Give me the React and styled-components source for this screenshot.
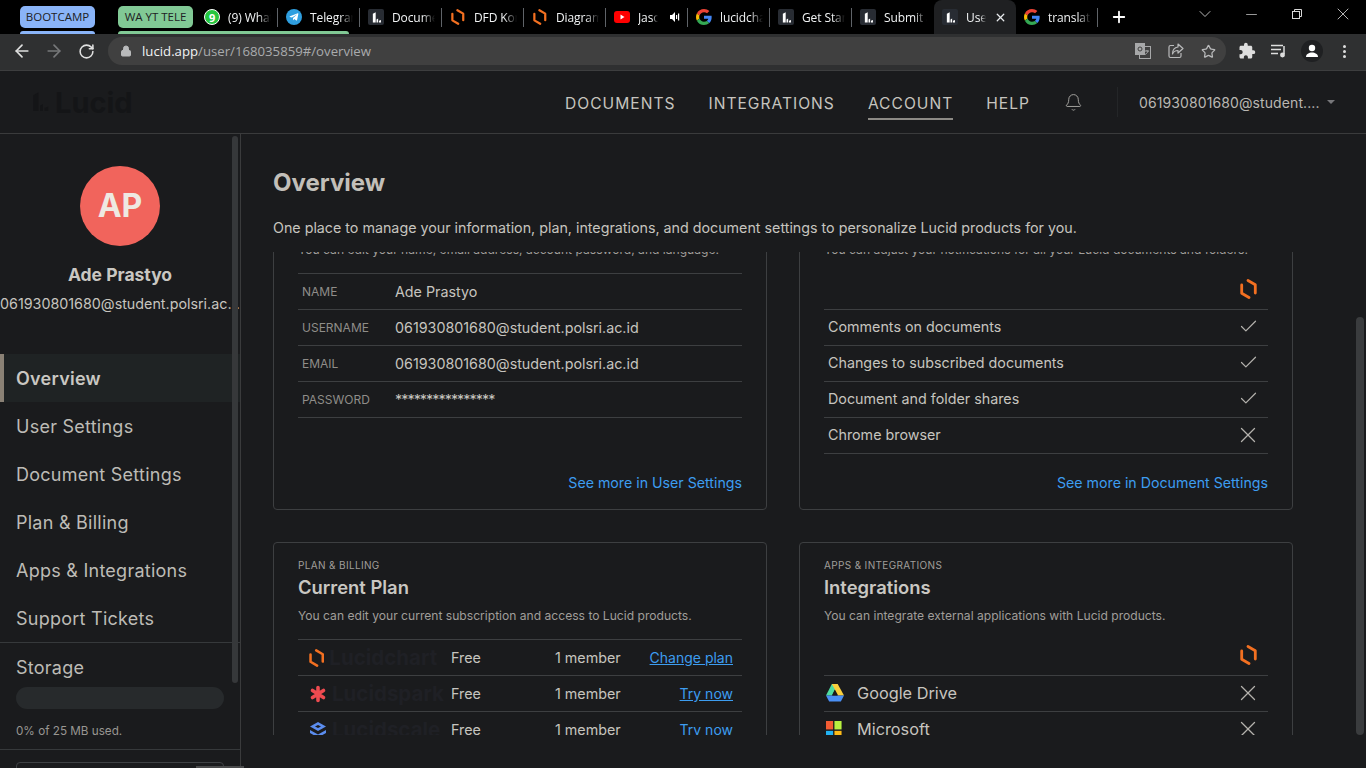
import React from "react";
import styled, { createGlobalStyle } from "styled-components";
import { FaTelegramPlane } from "react-icons/fa";
import { MdExtension } from "react-icons/md";
import { ArrowLeft, ArrowRight, RotateCw, Lock, Star, Bell, Check, X, Plus, ChevronDown, Minus } from "lucide-react";

const GlobalStyle = createGlobalStyle`
  html, body { margin: 0; padding: 0; height: 100%; background: #1a1b1d; overflow: hidden; }
  * { box-sizing: border-box; }
  body { font-family: Inter, "Liberation Sans", sans-serif; color: #c6c4bf; }
`;

const Page = styled.div`
  width: 1366px;
  height: 768px;
  display: flex;
  flex-direction: column;
  overflow: hidden;
`;

/* ---- browser chrome ---- */
const TabStrip = styled.div`
  height: 34px;
  background: #000;
  display: flex;
  padding-left: 20px;
  font-family: "Open Sans", "Liberation Sans", sans-serif;
  position: relative;
`;

const GroupChip = styled.div`
  width: 75px;
  height: 22px;
  margin-top: 6px;
  margin-right: ${(p) => p.$gap}px;
  border-radius: 5px;
  background: ${(p) => p.$color};
  color: #202124;
  font-size: 11.5px;
  line-height: 22px;
  text-align: center;
  white-space: nowrap;
  overflow: hidden;
`;

const GroupLine = styled.div`
  position: absolute;
  top: 31px;
  left: ${(p) => p.$left}px;
  width: ${(p) => p.$width}px;
  height: 3px;
  border-radius: 3px 3px 0 0;
  background: ${(p) => p.$color};
`;

const Tab = styled.div`
  width: 82px;
  height: 34px;
  flex: none;
  display: flex;
  align-items: center;
  padding-left: 8px;
  gap: 8px;
  position: relative;
  font-size: 12px;
  letter-spacing: -0.1px;
  color: #f1f3f4;
  ${(p) => p.$active && "background: #1f2022; border-radius: 8px 8px 0 0;"}
  ${(p) =>
    !p.$noSep &&
    `&::after {
      content: "";
      position: absolute;
      right: 0;
      top: 8px;
      width: 1px;
      height: 19px;
      background: #5f6368;
    }`}
`;

const TabLabel = styled.span`
  flex: 1;
  min-width: 0;
  overflow: hidden;
  white-space: nowrap;
  margin-right: ${(p) => p.$mr}px;
  -webkit-mask-image: linear-gradient(to right, #000 70%, transparent);
  mask-image: linear-gradient(to right, #000 70%, transparent);
`;

const AudioSlot = styled.span`
  position: absolute;
  left: 64px;
  top: 12px;
  display: flex;
`;

const TabClose = styled.span`
  position: absolute;
  right: 9px;
  top: 11px;
  display: flex;
  color: #e8eaed;
`;

const Favicon = styled.span`
  width: 16px;
  height: 16px;
  flex: none;
  display: flex;
  align-items: center;
  justify-content: center;
`;

const WhatsBadge = styled(Favicon)`
  background: #25c63f;
  border-radius: 50%;
  border: 1.5px solid #fff;
  color: #fff;
  font-size: 11px;
  font-weight: 700;
`;

const TeleBadge = styled(Favicon)`
  background: #2f9fe0;
  border-radius: 50%;
  color: #fff;
  font-size: 10px;
`;

const LucidTile = styled(Favicon)`
  background: #282c33;
  border-radius: 2px;
`;

const NewTab = styled.div`
  margin-left: 12px;
  width: 18px;
  display: flex;
  align-items: center;
  color: #fff;
`;

const WindowButtons = styled.div`
  margin-left: auto;
  display: flex;
  color: #d8d8d8;
`;

const WindowButton = styled.div`
  width: 46px;
  height: 28px;
  display: flex;
  align-items: center;
  justify-content: center;
`;

const Toolbar = styled.div`
  height: 37px;
  background: #2f3031;
  border-bottom: 1px solid #3d3e3f;
  display: flex;
  align-items: center;
  padding: 0 0 2px 6px;
  color: #dcdcdc;
`;

const NavIcon = styled.span`
  width: 32px;
  display: flex;
  justify-content: center;
  color: ${(p) => (p.$dim ? "#77787a" : "#e0e0e0")};
`;

const Omnibox = styled.div`
  width: 1118px;
  height: 28px;
  margin-left: 6px;
  border-radius: 14px;
  background: #404040;
  display: flex;
  align-items: center;
  padding-left: 12px;
  font-family: "Open Sans", "Liberation Sans", sans-serif;
  font-size: 13.2px;
  color: #a9abad;
`;

const LockIcon = styled(Lock)`
  margin-right: 10px;
`;

const Host = styled.span`
  color: #f1f3f4;
`;

const OmniActions = styled.div`
  margin-left: auto;
  display: flex;
  align-items: center;
  gap: 17px;
  padding-right: 10px;
  color: #b9babb;
`;

const ToolActions = styled.div`
  display: flex;
  align-items: center;
  gap: 14px;
  margin-left: 12px;
  color: #dedede;
`;

const QueueSlot = styled.span`
  display: flex;
  margin-left: 1px;
`;

const ProfileDot = styled.span`
  width: 22px;
  height: 22px;
  border-radius: 50%;
  background: #1f2022;
  display: flex;
  align-items: center;
  justify-content: center;
`;

const Dots = styled.span`
  display: flex;
  flex-direction: column;
  gap: 2px;
  margin-left: 6px;
  i {
    width: 3px;
    height: 3px;
    border-radius: 50%;
    background: #dedede;
  }
`;

/* ---- app header ---- */
const Header = styled.header`
  height: 63px;
  flex: none;
  display: flex;
  align-items: center;
  padding-left: 28px;
  border-bottom: 1px solid #3a3b3c;
  background: #1a1b1d;
`;

const Logo = styled.div`
  display: flex;
  align-items: center;
  gap: 3px;
  font-size: 29px;
  font-weight: 700;
  color: #141517;
`;

const TopNav = styled.nav`
  margin-left: auto;
  display: flex;
  align-items: center;
  height: 100%;
`;

const TopLink = styled.a`
  font-size: 15.6px;
  letter-spacing: 1px;
  color: #c6c4bf;
  margin-right: 33px;
  padding: 10px 0 5px;
  border-bottom: 2px solid ${(p) => (p.$active ? "#8c8a85" : "transparent")};
`;

const BellWrap = styled.span`
  display: flex;
  color: #a8a6a2;
  padding-right: 34px;
  margin-left: 1px;
  border-right: 1px solid #242628;
  height: 30px;
  align-items: center;
`;

const UserMenu = styled.div`
  width: 248px;
  padding-left: 21px;
  font-size: 14px;
  color: #b9b7b2;
  display: flex;
  align-items: center;
  letter-spacing: 0.1px;
  &::after {
    content: "";
    margin-left: 7px;
    border: 4px solid transparent;
    border-top-color: #77777a;
    border-bottom: 0;
  }
`;

/* ---- body ---- */
const Body = styled.div`
  flex: 1;
  min-height: 0;
  display: flex;
  position: relative;
`;

const Sidebar = styled.aside`
  width: 241px;
  flex: none;
  border-right: 1px solid #3a3b3c;
  position: relative;
  overflow: hidden;
`;

const ScrollThumb = styled.div`
  position: absolute;
  top: ${(p) => p.$top}px;
  left: ${(p) => p.$left}px;
  width: ${(p) => p.$w}px;
  height: ${(p) => p.$h}px;
  border-radius: 4px;
  background: #36383a;
  z-index: 1;
`;

const CornerThumb = styled(ScrollThumb)`
  border-radius: 0;
  background: #4a4b4c;
`;

const Profile = styled.div`
  padding-top: 32px;
  display: flex;
  flex-direction: column;
  align-items: center;
  height: 220px;
`;

const Avatar = styled.div`
  width: 80px;
  height: 80px;
  border-radius: 50%;
  background: #f1645c;
  color: #eee9e2;
  font-size: 32px;
  font-weight: 700;
  padding-bottom: 2px;
  display: flex;
  align-items: center;
  justify-content: center;
`;

const ProfileName = styled.div`
  margin-top: 18px;
  font-size: 17.5px;
  font-weight: 700;
  color: #c9c7c2;
  line-height: 22px;
`;

const ProfileMail = styled.div`
  margin-top: 8px;
  width: 240px;
  font-size: 14.3px;
  line-height: 20px;
  white-space: nowrap;
  overflow: hidden;
  text-overflow: ellipsis;
  color: #c6c4bf;
`;

const SideItem = styled.div`
  height: 48px;
  display: flex;
  align-items: center;
  padding-left: ${(p) => (p.$active ? 12 : 16)}px;
  font-size: 18px;
  letter-spacing: 0.25px;
  color: ${(p) => (p.$active ? "#c9c7c2" : "#bdbbb6")};
  font-weight: ${(p) => (p.$active ? 600 : 400)};
  background: ${(p) => (p.$active ? "#1f2324" : "transparent")};
  border-left: ${(p) => (p.$active ? "4px solid #8a8175" : "0")};
`;

const Storage = styled.div`
  border-top: 1px solid #36393b;
  border-bottom: 1px solid #36393b;
  height: 108px;
  padding: 13px 16px 0;
`;

const StorageTitle = styled.div`
  font-size: 18px;
  line-height: 24px;
  letter-spacing: 0.25px;
  color: #bdbbb6;
`;

const StorageBar = styled.div`
  height: 22px;
  margin-top: 7px;
  border-radius: 11px;
  background: #272a2c;
`;

const StorageNote = styled.div`
  margin-top: 14px;
  font-size: 11.7px;
  line-height: 16px;
  color: #989692;
`;

const SideBox = styled.div`
  margin: 12px 16px 0;
  height: 40px;
  border: 1px solid #3e4144;
  border-radius: 4px;
`;

const Main = styled.main`
  flex: 1;
  min-width: 0;
  position: relative;
  padding-left: 32px;
`;

const Title = styled.h1`
  margin: 35px 0 0;
  font-size: 24px;
  line-height: 28px;
  font-weight: 700;
  color: #c2bfb9;
`;

const Lead = styled.p`
  margin: 21px 0 0;
  font-size: 14.27px;
  line-height: 20px;
  color: #c6c4bf;
`;

const Clip = styled.div`
  margin-top: 14px;
  height: 483px;
  overflow: hidden;
`;

const CardGrid = styled.div`
  margin-top: -76px;
  display: grid;
  grid-template-columns: 494px 494px;
  column-gap: 32px;
  row-gap: 32px;
`;

const Card = styled.section`
  height: ${(p) => p.$h}px;
  border: 1px solid #3d3f41;
  border-radius: 4px;
  padding: 0 24px;
  position: relative;
`;

const Eyebrow = styled.div`
  padding-top: 15px;
  font-size: 10px;
  line-height: 14px;
  letter-spacing: 0.35px;
  color: #a09e9a;
  text-transform: uppercase;
`;

const CardTitle = styled.h2`
  margin: 3px 0 0;
  font-size: 18.4px;
  line-height: 24px;
  font-weight: 600;
  color: #c9c7c2;
`;

const CardText = styled.p`
  margin: 9px 0 0;
  font-size: 12.1px;
  line-height: 16px;
  color: #a09e9a;
`;

const Rows = styled.div`
  margin-top: 15px;
`;

const Row = styled.div`
  height: 36px;
  padding-bottom: ${(p) => (p.$lift ? 2 : 0)}px;
  border-top: 1px solid #3d3f41;
  display: flex;
  align-items: center;
  font-size: 14.3px;
  color: #c6c4bf;
  &:last-child {
    border-bottom: 1px solid #3d3f41;
    height: 37px;
  }
`;

const Label = styled.span`
  width: 97px;
  padding-left: 4px;
  font-size: 12px;
  color: #8f8d89;
`;

const Masked = styled.span`
  letter-spacing: -0.95px;
`;

const LogoRow = styled.div`
  height: 36px;
  padding: 0 11px 4px 0;
  display: flex;
  justify-content: flex-end;
  align-items: center;
`;

const RowName = styled.span`
  padding-left: 4px;
  flex: 1;
`;

const MarkIcon = styled.span`
  width: 26px;
  margin-right: 7px;
  display: flex;
  justify-content: center;
  color: #b4b2ad;
`;

const SeeMore = styled.a`
  position: absolute;
  right: 24px;
  top: 296px;
  font-size: 14.2px;
  line-height: 20px;
  color: #3d9df0;
`;

const Product = styled.span`
  width: 153px;
  padding-left: 11px;
  display: flex;
  align-items: center;
  gap: 5px;
  font-size: 20.5px;
  font-weight: 700;
  color: #1f2025;
  white-space: nowrap;
`;

const Cell = styled.span`
  width: ${(p) => p.$w}px;
`;

const PlanLink = styled.a`
  margin-left: auto;
  padding-right: 9px;
  font-size: 14px;
  color: #3d9df0;
  text-decoration: underline;
`;

const AppName = styled.span`
  flex: 1;
  display: flex;
  align-items: center;
  gap: 10px;
  font-size: 16.3px;
`;

const AppIcon = styled.span`
  width: 23px;
  padding-left: 2px;
  display: flex;
`;

const PageThumb = styled(ScrollThumb)`
  background: #3a3c3e;
`;

/* ---- drawings ---- */
const LucidGlyph = ({ size = 16, color = "#fff" }) => (
  <svg width={size} height={size} viewBox="0 0 16 16">
    <path d="M3.500 3.500 7 1.500V14H3.500z M8 14v-3.500l2-1.200V14z M11 14v-2l2.500-1v3z" fill={color} />
  </svg>
);

const Hex = ({ size = 16 }) => (
  <svg width={size * 0.85} height={size} viewBox="0 0 17 20" fill="none" stroke="#f37021" strokeWidth="2.800" strokeLinecap="round" strokeLinejoin="round">
    <path d="M8 1.500 15.300 5.800V14M9 18.500 1.700 14.200V6" />
  </svg>
);

const GoogleG = () => (
  <svg width="16" height="16" viewBox="0 0 48 48">
    <path fill="#EA4335" d="M24 9.500c3.500 0 6.700 1.200 9.200 3.600l6.900-6.900C35.900 2.400 30.500 0 24 0 14.600 0 6.500 5.400 2.600 13.200l8 6.200C12.500 13.600 17.800 9.500 24 9.500z" />
    <path fill="#4285F4" d="M47 24.500c0-1.600-.1-3.100-.4-4.500H24v9h12.900c-.6 3-2.200 5.500-4.700 7.200l7.700 6C44.400 37.900 47 31.800 47 24.500z" />
    <path fill="#FBBC05" d="M10.500 28.600c-.5-1.400-.8-3-.8-4.600s.3-3.200.8-4.600l-8-6.200C.9 16.400 0 20.100 0 24s.9 7.600 2.600 10.800z" />
    <path fill="#34A853" d="M24 48c6.500 0 11.900-2.100 15.900-5.800l-7.700-6c-2.200 1.400-4.900 2.300-8.200 2.300-6.200 0-11.500-4.200-13.400-9.800l-8 6.200C6.500 42.600 14.600 48 24 48z" />
  </svg>
);

const YouTube = () => (
  <svg width="16" height="12" viewBox="0 0 16 12">
    <rect width="16" height="12" rx="3" fill="#f00" />
    <path d="M6.500 3.500v5l4-2.500z" fill="#fff" />
  </svg>
);

const Speaker = () => (
  <svg width="10" height="10" viewBox="0 0 10 10" fill="#fff">
    <path d="M0 3h2l3-3v10L2 7H0z" />
    <rect x="6" y="3" width="1.200" height="4" />
    <rect x="8" y="1.500" width="1.200" height="7" />
  </svg>
);

const TranslateIcon = () => (
  <svg width="16" height="16" viewBox="0 0 16 16" fill="none" stroke="#a7a8a9">
    <rect x="4.500" y="3.500" width="11" height="12" />
    <rect x="0.500" y="0.500" width="9" height="11" fill="#a7a8a9" />
    <circle cx="5" cy="6" r="2" stroke="#404040" />
    <path d="M10 8h4M12 7v1M13 8c-.5 2-2 3-3 3.500" />
  </svg>
);

const ShareArrow = () => (
  <svg width="16" height="16" viewBox="0 0 16 16" fill="none" stroke="#b9babb" strokeWidth="1.200" strokeLinejoin="round">
    <path d="M6 2.500H2.500a1.500 1.500 0 0 0-1.500 1.500v9a1.500 1.500 0 0 0 1.500 1.500h9a1.500 1.500 0 0 0 1.500-1.500v-3" />
    <path d="M10 1l5 4.500-5 4.500V7.500C7.500 7.500 5.500 8.500 4.500 11c0-4 2-6.500 5.500-7z" />
  </svg>
);

const QueueIcon = () => (
  <svg width="16" height="14" viewBox="0 0 16 14" fill="none" stroke="#dedede" strokeWidth="1.500">
    <path d="M0 1.500h12M0 5.500h10M0 9.500h7M13 2v8" />
    <circle cx="11.500" cy="11" r="1.700" fill="#dedede" />
  </svg>
);

const RestoreIcon = () => (
  <svg width="10" height="10" viewBox="0 0 10 10" fill="none" stroke="#d8d8d8">
    <rect x="0.500" y="2.500" width="7" height="7" />
    <path d="M2.500 2.500v-2h7v7h-2" />
  </svg>
);

const PersonIcon = () => (
  <svg width="14" height="14" viewBox="0 0 14 14" fill="#fff">
    <circle cx="7" cy="4" r="3.200" />
    <path d="M1 13c0-3 3-4.500 6-4.500s6 1.500 6 4.500z" />
  </svg>
);

const Spark = () => (
  <svg width="18" height="18" viewBox="0 0 18 18" stroke="#ee4b50" strokeWidth="3.600" strokeLinecap="round">
    <path d="M9 2.500v13M3.500 5.500l11 7M14.500 5.500l-11 7" />
  </svg>
);

const Scale = () => (
  <svg width="18" height="18" viewBox="0 0 18 18">
    <path d="M9 1 17 5.500 9 10 1 5.500z" fill="#5b8def" />
    <path d="M9 4 12 5.500 9 7 6 5.500z" fill="#1a1b1d" />
    <path d="M1 9l8 4.500L17 9v3l-8 4.500L1 12z" fill="#5b8def" />
  </svg>
);

const Drive = () => (
  <svg width="18" height="18" viewBox="0 0 20 18" preserveAspectRatio="none">
    <path d="M6.500 0h6.500L6.500 11.500H0z" fill="#4fdca0" />
    <path d="M13 0l7 11.500h-6.500L6.500 0z" fill="#f9cf3c" />
    <path d="M0 11.500h20L16.500 17.500H3.500z" fill="#4a90f5" />
    <path d="M9.700 6 12.500 11.500H7z" fill="#1a1b1d" />
  </svg>
);

const MsLogo = () => (
  <svg width="16" height="15" viewBox="0 0 18 16" preserveAspectRatio="none">
    <rect width="8" height="9" fill="#f25c33" />
    <rect x="9.500" width="8" height="9" fill="#b8f040" />
    <rect y="10.500" width="8" height="5.500" fill="#22b2f2" />
    <rect x="9.500" y="10.500" width="8" height="5.500" fill="#fdbb18" />
  </svg>
);

const tabs = [
  { icon: <WhatsBadge>9</WhatsBadge>, label: "(9) WhatsApp" },
  { icon: <TeleBadge><FaTelegramPlane /></TeleBadge>, label: "Telegram" },
  { icon: <LucidTile><LucidGlyph size={13} /></LucidTile>, label: "Documents" },
  { icon: <Favicon><Hex /></Favicon>, label: "DFD Kompe" },
  { icon: <Favicon><Hex /></Favicon>, label: "Diagram" },
  { icon: <Favicon><YouTube /></Favicon>, label: "Jason Mraz", audio: true },
  { icon: <Favicon><GoogleG /></Favicon>, label: "lucidchart" },
  { icon: <LucidTile><LucidGlyph size={13} /></LucidTile>, label: "Get Started" },
  { icon: <LucidTile><LucidGlyph size={13} /></LucidTile>, label: "Submit a" },
  { icon: <LucidTile><LucidGlyph size={13} /></LucidTile>, label: "User", active: true },
  { icon: <Favicon><GoogleG /></Favicon>, label: "translate" },
];

const sideItems = ["Overview", "User Settings", "Document Settings", "Plan & Billing", "Apps & Integrations", "Support Tickets"];

const accountRows = [
  ["NAME", "Ade Prastyo"],
  ["USERNAME", "061930801680@student.polsri.ac.id"],
  ["EMAIL", "061930801680@student.polsri.ac.id"],
  ["PASSWORD", <Masked>****************</Masked>],
];

const notifyRows = [
  ["Comments on documents", true],
  ["Changes to subscribed documents", true],
  ["Document and folder shares", true],
  ["Chrome browser", false],
];

const plans = [
  { name: "Lucidchart", icon: <Hex size={18} />, link: "Change plan" },
  { name: "Lucidspark", icon: <Spark />, link: "Try now" },
  { name: "Lucidscale", icon: <Scale />, link: "Try now" },
];

const Mark = ({ ok }) => (
  <MarkIcon>{ok ? <Check size={21} strokeWidth={1.4} /> : <X size={26} strokeWidth={1.2} />}</MarkIcon>
);

export default function App() {
  return (
    <Page>
      <GlobalStyle />
      <TabStrip>
        <GroupChip $color="#8ab4f8" $gap={23}>BOOTCAMP</GroupChip>
        <GroupChip $color="#81c995" $gap={3}>WA YT TELE</GroupChip>
        <GroupLine $left={20} $width={75} $color="#8ab4f8" />
        <GroupLine $left={118} $width={231} $color="#81c995" />
        {tabs.map((t, i) => (
          <Tab key={i} $active={t.active} $noSep={t.active || i === 8}>
            {t.icon}
            <TabLabel $mr={t.audio ? 30 : t.active ? 30 : 7}>{t.label}</TabLabel>
            {t.audio && <AudioSlot><Speaker /></AudioSlot>}
            {t.active && <TabClose><X size={13} strokeWidth={2.4} /></TabClose>}
          </Tab>
        ))}
        <NewTab><Plus size={18} strokeWidth={2.4} /></NewTab>
        <WindowButtons>
          <WindowButton><ChevronDown size={20} strokeWidth={1} /></WindowButton>
          <WindowButton><Minus size={17} strokeWidth={1} /></WindowButton>
          <WindowButton><RestoreIcon /></WindowButton>
          <WindowButton><X size={20} strokeWidth={1} /></WindowButton>
        </WindowButtons>
      </TabStrip>
      <Toolbar>
        <NavIcon><ArrowLeft size={20} /></NavIcon>
        <NavIcon $dim><ArrowRight size={20} /></NavIcon>
        <NavIcon><RotateCw size={17} strokeWidth={2.2} /></NavIcon>
        <Omnibox>
          <LockIcon size={12} fill="#b9babb" color="#b9babb" />
          <Host>lucid.app</Host>/user/168035859#/overview
          <OmniActions>
            <TranslateIcon />
            <ShareArrow />
            <Star size={15} />
          </OmniActions>
        </Omnibox>
        <ToolActions>
          <MdExtension size={18} />
          <QueueSlot><QueueIcon /></QueueSlot>
          <ProfileDot><PersonIcon /></ProfileDot>
          <Dots><i /><i /><i /></Dots>
        </ToolActions>
      </Toolbar>

      <Header>
        <Logo><LucidGlyph size={24} color="#141517" />Lucid</Logo>
        <TopNav>
          <TopLink>DOCUMENTS</TopLink>
          <TopLink>INTEGRATIONS</TopLink>
          <TopLink $active>ACCOUNT</TopLink>
          <TopLink>HELP</TopLink>
          <BellWrap><Bell size={19} strokeWidth={1.2} /></BellWrap>
          <UserMenu>061930801680@student....</UserMenu>
        </TopNav>
      </Header>

      <Body>
        <Sidebar>
          <ScrollThumb $top={2} $left={232} $w={6} $h={547} />
          <Profile>
            <Avatar>AP</Avatar>
            <ProfileName>Ade Prastyo</ProfileName>
            <ProfileMail>061930801680@student.polsri.ac.id</ProfileMail>
          </Profile>
          {sideItems.map((s, i) => (
            <SideItem key={s} $active={i === 0}>{s}</SideItem>
          ))}
          <Storage>
            <StorageTitle>Storage</StorageTitle>
            <StorageBar />
            <StorageNote>0% of 25 MB used.</StorageNote>
          </Storage>
          <SideBox />
        </Sidebar>
        <CornerThumb $top={632} $left={196} $w={48} $h={2} />
        <Main>
          <PageThumb $top={183} $left={1115} $w={8} $h={418} />
          <Title>Overview</Title>
          <Lead>One place to manage your information, plan, integrations, and document settings to personalize Lucid products for you.</Lead>
          <Clip>
            <CardGrid>
              <Card $h={334}>
                <Eyebrow>User settings</Eyebrow>
                <CardTitle>Account</CardTitle>
                <CardText>You can edit your name, email address, account password, and language.</CardText>
                <Rows>
                  {accountRows.map(([k, v]) => (
                    <Row key={k}><Label>{k}</Label>{v}</Row>
                  ))}
                </Rows>
                <SeeMore>See more in User Settings</SeeMore>
              </Card>
              <Card $h={334}>
                <Eyebrow>Document settings</Eyebrow>
                <CardTitle>Notifications</CardTitle>
                <CardText>You can adjust your notifications for all your Lucid documents and folders.</CardText>
                <Rows>
                  <LogoRow><Hex size={20} /></LogoRow>
                  {notifyRows.map(([k, ok]) => (
                    <Row key={k} $lift><RowName>{k}</RowName><Mark ok={ok} /></Row>
                  ))}
                </Rows>
                <SeeMore>See more in Document Settings</SeeMore>
              </Card>
              <Card $h={300}>
                <Eyebrow>Plan &amp; billing</Eyebrow>
                <CardTitle>Current Plan</CardTitle>
                <CardText>You can edit your current subscription and access to Lucid products.</CardText>
                <Rows>
                  {plans.map((p) => (
                    <Row key={p.name}>
                      <Product>{p.icon}{p.name}</Product>
                      <Cell $w={104}>Free</Cell>
                      <Cell $w={90}>1 member</Cell>
                      <PlanLink>{p.link}</PlanLink>
                    </Row>
                  ))}
                </Rows>
              </Card>
              <Card $h={300}>
                <Eyebrow>Apps &amp; integrations</Eyebrow>
                <CardTitle>Integrations</CardTitle>
                <CardText>You can integrate external applications with Lucid products.</CardText>
                <Rows>
                  <LogoRow><Hex size={20} /></LogoRow>
                  <Row $lift><AppName><AppIcon><Drive /></AppIcon>Google Drive</AppName><Mark /></Row>
                  <Row $lift><AppName><AppIcon><MsLogo /></AppIcon>Microsoft</AppName><Mark /></Row>
                </Rows>
              </Card>
            </CardGrid>
          </Clip>
        </Main>
      </Body>
    </Page>
  );
}
